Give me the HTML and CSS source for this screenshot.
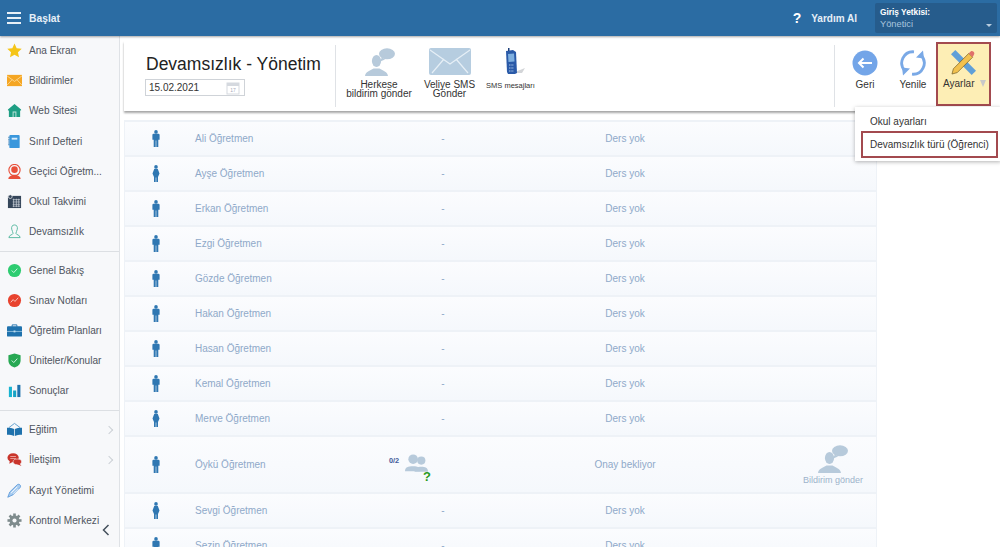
FILE: index.html
```html
<!DOCTYPE html>
<html lang="tr">
<head>
<meta charset="utf-8">
<title>Devamsızlık - Yönetim</title>
<link rel="stylesheet" href="styles.css">
</head>
<body>
<svg class="defs" width="0" height="0">
  <symbol id="man" viewBox="0 0 8 17"><ellipse cx="4" cy="1.900" rx="1.800" ry="1.900"/><path d="M.4 5q0-1.200 1.200-1.200h4.800q1.200 0 1.200 1.200v4.800H6.300V17H4.300v-6.500h-.6V17H1.700V9.800H.4z"/></symbol>
  <symbol id="woman" viewBox="0 0 8 17"><ellipse cx="4" cy="1.900" rx="1.800" ry="1.900"/><path d="M2.200 4h3.600L7.500 8.500 6 12v5H4.300v-4.500h-.6V17H2v-5L.5 8.500z"/></symbol>
  <symbol id="chat" viewBox="0 0 30 28"><ellipse cx="22" cy="5.800" rx="8" ry="5.500"/><path d="M17 9.500l-3 4.500 6-2.500z"/><ellipse cx="11.500" cy="13" rx="4.600" ry="6"/><path d="M0 28c.5-4.500 5-5 8.500-7.500h6C18 23 22.500 23.500 23 28z"/></symbol>
</svg>
<header class="topbar">
  <div class="burger"><i></i><i></i><i></i></div>
  <span class="start">Başlat</span>
  <span class="help-mark">?</span>
  <span class="help">Yardım Al</span>
  <div class="role">
    <b>Giriş Yetkisi:</b>
    <span class="role-value">Yönetici</span>
    <span class="role-caret"></span>
  </div>
</header>
<div class="shell">
  <nav class="sidebar">
    <a class="nav-item"><svg class="nav-icon" viewBox="0 0 16 16"><path fill="#f5c518" d="M8 .5l2.300 5 5.400.6-4 3.700 1.100 5.400L8 12.500l-4.800 2.700 1.100-5.400-4-3.700 5.400-.6z"/></svg>Ana Ekran</a>
    <a class="nav-item"><svg class="nav-icon" viewBox="0 0 16 12"><rect width="16" height="12" fill="#f5a623"/><path d="M0 1l8 6 8-6M0 11l5.500-6M16 11l-5.500-6" fill="none" stroke="#fde1a8" stroke-width=".8"/></svg>Bildirimler</a>
    <a class="nav-item"><svg class="nav-icon" viewBox="0 0 16 16"><path fill="#1e9e84" d="M8 1l7 6v1h-1v7H2V8H1V7z"/><path fill="#bfe5dc" d="M6 9h4v6H9v-5H7v5H6z"/></svg>Web Sitesi</a>
    <a class="nav-item"><svg class="nav-icon" viewBox="0 0 16 16"><rect x="2.500" y="1" width="11" height="14" rx="1" fill="#3a97dc"/><rect x="5" y="4" width="6" height="2" fill="#d7ecfb"/><path d="M2 3v10" stroke="#1b6aa8" stroke-width="1.200" stroke-dasharray="1 1"/></svg>Sınıf Defteri</a>
    <a class="nav-item"><svg class="nav-icon" viewBox="0 0 16 16"><circle cx="8" cy="6.500" r="6" fill="none" stroke="#e8503a" stroke-width="1.200"/><circle cx="8" cy="6" r="3.500" fill="#e8503a"/><path fill="#e8503a" d="M1.500 16c0-3 3-3.500 5-4.500h3c2 1 5 1.500 5 4.500z"/></svg>Geçici Öğretm...</a>
    <a class="nav-item"><svg class="nav-icon" viewBox="0 0 16 16"><rect x="1" y="2" width="14" height="13" fill="#35465a"/><circle cx="3.500" cy="2.800" r="2" fill="#35465a" stroke="#fff" stroke-width=".7"/><path d="M6 6h8M6 8.500h8M6 11h8M6 13h8M7 5v9M10 5v9M12.500 5v9" stroke="#cfd6dd" stroke-width=".7"/></svg>Okul Takvimi</a>
    <a class="nav-item"><svg class="nav-icon" viewBox="0 0 16 16"><path fill="none" stroke="#56b9a0" stroke-width="1" d="M8 1c2.500 0 3.500 2 3 4.500-.3 2-1.500 3-1.500 4.500 0 1.500 4.500 1.500 4.500 4.500H2C2 11.500 6.500 11.500 6.500 10 6.500 8.500 5.300 7.500 5 5.500 4.500 3 5.500 1 8 1z"/></svg>Devamsızlık</a>
    <hr class="nav-rule">
    <a class="nav-item"><svg class="nav-icon" viewBox="0 0 16 16"><circle cx="8" cy="8" r="7" fill="#2ecc71"/><path d="M5 8l2.200 2.200L11 6" fill="none" stroke="#d5f5e3" stroke-width="1"/></svg>Genel Bakış</a>
    <a class="nav-item"><svg class="nav-icon" viewBox="0 0 16 16"><circle cx="8" cy="8" r="7" fill="#e8432e"/><path d="M4 10l2.500-3 2 2L12 5" fill="none" stroke="#f8c9c2" stroke-width="1"/></svg>Sınav Notları</a>
    <a class="nav-item"><svg class="nav-icon" viewBox="0 0 16 14"><path d="M5.500 3V1h5v2" fill="none" stroke="#1f72ad" stroke-width="1"/><rect y="2.500" width="16" height="11" rx="1" fill="#1f72ad"/><path d="M0 8h16" stroke="#bcdcf0" stroke-width=".7"/><rect x="7" y="7" width="2" height="2" fill="#bcdcf0"/></svg>Öğretim Planları</a>
    <a class="nav-item"><svg class="nav-icon" viewBox="0 0 16 16"><path fill="#27a853" d="M8 .5l6.500 2V8c0 4-3 6.500-6.500 7.500C4.500 14.500 1.500 12 1.500 8V2.500z"/><path d="M5 8l2.200 2.200L11 6" fill="none" stroke="#d5f5e3" stroke-width="1"/></svg>Üniteler/Konular</a>
    <a class="nav-item"><svg class="nav-icon" viewBox="0 0 16 16"><rect x="2" y="4" width="3.300" height="11" fill="#17b3d1"/><rect x="6.500" y="8" width="3.300" height="7" fill="#17a2c4"/><rect x="11" y="2" width="3.300" height="13" fill="#1f72ad"/></svg>Sonuçlar</a>
    <hr class="nav-rule">
    <a class="nav-item has-sub"><svg class="nav-icon" viewBox="0 0 16 16"><path d="M2 6l6-4.500L14 6" fill="none" stroke="#5d9ccb" stroke-width="1"/><path fill="#1f72ad" d="M0 6c3 0 6 .3 7.600 1.500V15C6 14 3 13.500 0 13.500zM16 6c-3 0-6 .3-7.600 1.500V15c1.600-1 4.600-1.500 7.600-1.500z"/></svg>Eğitim</a>
    <a class="nav-item has-sub"><svg class="nav-icon" viewBox="0 0 16 16"><ellipse cx="6.500" cy="6" rx="6" ry="4.800" fill="#c9352b"/><path fill="#c9352b" d="M3 9l-.5 3.500L7 10z"/><ellipse cx="11" cy="10.500" rx="4.500" ry="3" fill="#c9352b" stroke="#f7f8fa" stroke-width=".6"/><path fill="#c9352b" d="M13 12l2.500 3-4.500-2z"/><path d="M3.500 4.800h6M3.500 7h6" stroke="#f4c2bd" stroke-width=".8"/></svg>İletişim</a>
    <a class="nav-item"><svg class="nav-icon" viewBox="0 0 16 16"><path fill="#a9cdf0" stroke="#4c8fd6" stroke-width=".8" d="M.8 15.200L3 9.500 11 1.800c2-1.500 4.500 1 3 3L6.500 12.500z"/><path fill="none" stroke="#fff" stroke-width=".9" d="M4.500 10.500L11 4M7 11.500l5-5"/></svg>Kayıt Yönetimi</a>
    <a class="nav-item"><svg class="nav-icon" viewBox="0 0 16 16"><circle cx="8" cy="8" r="3.800" fill="none" stroke="#7f8c8d" stroke-width="3"/><g fill="#7f8c8d"><rect x="6.600" y=".5" width="2.800" height="15"/><rect x="6.600" y=".5" width="2.800" height="15" transform="rotate(45 8 8)"/><rect x="6.600" y=".5" width="2.800" height="15" transform="rotate(90 8 8)"/><rect x="6.600" y=".5" width="2.800" height="15" transform="rotate(135 8 8)"/></g><circle cx="8" cy="8" r="2.200" fill="#f7f8fa"/></svg>Kontrol Merkezi</a>
    <svg class="collapse" viewBox="0 0 8 12"><path d="M6.500 1L1.500 6l5 5" fill="none" stroke="#44505c" stroke-width="1.500"/></svg>
  </nav>
  <main class="content">
    <section class="toolbar">
      <div class="title-block">
        <h1>Devamsızlık - Yönetim</h1>
        <div class="date-box"><span>15.02.2021</span><svg class="cal" viewBox="0 0 14 14"><rect x="1" y="2" width="12" height="11" fill="#fff" stroke="#d5d9df"/><rect x="1" y="2" width="12" height="3" fill="#d5d9df"/><text x="7" y="11" class="cal-num">17</text></svg></div>
      </div>
      <div class="actions">
        <div class="action"><svg class="act-chat"><use href="#chat"/></svg><span>Herkese<br>bildirim gönder</span></div>
        <div class="action sms"><svg class="act-mail" viewBox="0 0 42 27"><rect width="42" height="27" rx="2" fill="#b6cde0"/><path d="M1 2l20 14L41 2M3 25l12-14M39 25L27 11" fill="none" stroke="#e6eff6" stroke-width="1.200"/></svg><span>Veliye SMS<br>Gönder</span></div>
        <div class="action phone"><svg class="act-phone" viewBox="0 0 20 26"><path fill="#d3d5d8" d="M10 24l10-4-3 5H8z"/><path fill="#2a5aa8" d="M1 3l7-1 3 2 1 21-2 1H3l-1-2z"/><path fill="#1d3f7a" d="M3 0h1.500v3H3z"/><path fill="#7fb0e0" d="M3 6l6-.5.500 8-6 .5z"/><path d="M4 17h5M4 20h5M4 23h5" stroke="#a5c2e6" stroke-width="1" stroke-dasharray="1.500 .8"/></svg><span>SMS mesajları</span></div>
      </div>
      <div class="nav-actions">
        <div class="tool"><svg class="tool-icon" viewBox="0 0 26 26"><circle cx="13" cy="13" r="12.500" fill="#73a5e8"/><path d="M20 13H7M11.500 8.500L7 13l4.500 4.500" fill="none" stroke="#fff" stroke-width="2"/></svg><span>Geri</span></div>
        <div class="tool"><svg class="tool-icon" viewBox="0 0 26 26"><g fill="none" stroke="#7aa9e6" stroke-width="2.800"><path d="M21 5.200A11.200 11.200 0 0 1 12 24.200"/><path d="M5 20.800A11.200 11.200 0 0 1 14 1.800"/></g><path fill="#7aa9e6" d="M16 7.500L24 8.500 23 .5zM10 18.500L2 17.500 3 25.500z"/></svg><span>Yenile</span></div>
        <div class="tool settings"><svg class="tool-icon" viewBox="0 0 26 26"><path d="M4.500 0L0 4.500 21.500 26l4.500-4.500z" fill="#5f9fd8"/><path d="M1 25l1.500-5.500 16-16 4 4-16 16z" fill="#f2c14e" stroke="#6f5a22" stroke-width=".7"/><path d="M18.500 3.500l2-2c1-.8 2-.6 3 .4s1 2.200.3 3.100l-1.300 2.500z" fill="#e0706a"/></svg><span>Ayarlar<i class="down"></i></span></div>
      </div>
    </section>
    <div class="menu">
      <div class="menu-item">Okul ayarları</div>
      <div class="menu-item marked">Devamsızlık türü (Öğrenci)</div>
    </div>
    <section class="list">
      <div class="row"><svg class="person"><use href="#man"/></svg><span class="name">Ali Öğretmen</span><span class="dash">-</span><span class="status">Ders yok</span></div>
      <div class="row"><svg class="person"><use href="#woman"/></svg><span class="name">Ayşe Öğretmen</span><span class="dash">-</span><span class="status">Ders yok</span></div>
      <div class="row"><svg class="person"><use href="#man"/></svg><span class="name">Erkan Öğretmen</span><span class="dash">-</span><span class="status">Ders yok</span></div>
      <div class="row"><svg class="person"><use href="#man"/></svg><span class="name">Ezgi Öğretmen</span><span class="dash">-</span><span class="status">Ders yok</span></div>
      <div class="row"><svg class="person"><use href="#man"/></svg><span class="name">Gözde Öğretmen</span><span class="dash">-</span><span class="status">Ders yok</span></div>
      <div class="row"><svg class="person"><use href="#man"/></svg><span class="name">Hakan Öğretmen</span><span class="dash">-</span><span class="status">Ders yok</span></div>
      <div class="row"><svg class="person"><use href="#man"/></svg><span class="name">Hasan Öğretmen</span><span class="dash">-</span><span class="status">Ders yok</span></div>
      <div class="row"><svg class="person"><use href="#man"/></svg><span class="name">Kemal Öğretmen</span><span class="dash">-</span><span class="status">Ders yok</span></div>
      <div class="row"><svg class="person"><use href="#woman"/></svg><span class="name">Merve Öğretmen</span><span class="dash">-</span><span class="status">Ders yok</span></div>
      <div class="row tall"><svg class="person"><use href="#man"/></svg><span class="name">Öykü Öğretmen</span>
        <span class="dash attend"><b>0/2</b><svg class="group" viewBox="0 0 24 18"><g fill="#b7cadb"><circle cx="17" cy="6.500" r="4.300"/><path d="M10 18c0-4 3-5 7-5s7 1 7 5z"/><circle cx="8.500" cy="5" r="5"/><path d="M0 17.500c0-4 3-5 8.500-5s6 1 7 5z"/></g></svg><em>?</em></span>
        <span class="status">Onay bekliyor</span>
        <span class="notify"><svg class="notify-icon"><use href="#chat"/></svg>Bildirim gönder</span></div>
      <div class="row"><svg class="person"><use href="#woman"/></svg><span class="name">Sevgi Öğretmen</span><span class="dash">-</span><span class="status">Ders yok</span></div>
      <div class="row"><svg class="person"><use href="#man"/></svg><span class="name">Sezin Öğretmen</span><span class="dash">-</span><span class="status">Ders yok</span></div>
    </section>
  </main>
</div>
</body>
</html>
```
FILE: styles.css
```css
* { box-sizing: border-box; }
html, body { margin: 0; height: 547px; overflow: hidden; }
body { font-family: "Liberation Sans", Arial, sans-serif; background: #fff; color: #333; display: flex; flex-direction: column; }
.defs { position: absolute; }

.topbar { height: 36px; flex: none; background: #2b6ca3; display: flex; align-items: center; color: #fff; box-shadow: 0 1px 2px rgba(0,0,0,.35); position: relative; z-index: 3; padding-left: 7px; }
.burger { width: 14px; display: flex; flex-direction: column; gap: 3px; }
.burger i { display: block; height: 2px; background: #e8f0f7; }
.start { font-size: 10.300px; font-weight: 700; margin-left: 8px; flex: 1; color: #e6eff7; }
.help-mark { font-size: 14px; font-weight: 700; margin-right: 10px; }
.help { font-size: 10px; font-weight: 700; margin-right: 18px; color: #e6eff7; }
.role { width: 122px; height: 30px; background: #265c8c; border-radius: 2px; margin-right: 3px; padding: 4px 5px; position: relative; display: flex; flex-direction: column; gap: 2px; font-size: 9.300px; line-height: 10px; }
.role b { font-size: 8.300px; }
.role-value { color: #a9c6de; }
.role-caret { position: absolute; right: 5px; bottom: 6px; border: 3px solid transparent; border-top: 3px solid #b7cde0; border-bottom: 0; width: 0; }

.shell { flex: 1; display: flex; min-height: 0; }
.sidebar { width: 120px; flex: none; background: #f7f8fa; border-right: 1px solid #dfe2e6; position: relative; overflow: hidden; }
.nav-item { display: flex; align-items: center; height: 30.100px; padding-bottom: .6px; font-size: 10.100px; color: #4f5560; padding-left: 7px; position: relative; }
.nav-icon { width: 15px; height: 15px; margin-right: 7px; flex: none; }
.nav-rule { border: 0; border-top: 1px solid #dcdfe3; margin: 4px 0; height: 0; }
.has-sub::after { content: ""; position: absolute; right: 7px; top: 12px; width: 5px; height: 5px; border-top: 1px solid #ccd1d6; border-right: 1px solid #ccd1d6; transform: rotate(45deg); }
.collapse { position: absolute; right: 9px; bottom: 11px; width: 8px; height: 12px; }

.content { flex: 1; min-width: 0; background: #fff; padding: 5px 0 0 4px; position: relative; overflow: hidden; }
.toolbar { height: 70px; background: #fff; box-shadow: 0 2px 2px rgba(0,0,0,.35); display: flex; align-items: stretch; padding: 4px 0 4px; }
.title-block { width: 212px; padding: 9px 0 0 22px; border-right: 1px solid #dfe2e6; }
h1 { margin: 0; font-size: 17.500px; font-weight: 400; line-height: 20px; color: #222; white-space: nowrap; }
.date-box { margin: 5px 0 0 -1px; width: 100px; height: 17px; border: 1px solid #cfd3d8; display: flex; align-items: center; justify-content: space-between; padding: 0 4px 0 3px; font-size: 10px; color: #333; }
.cal { width: 14px; height: 14px; }
.cal-num { font-size: 5px; text-anchor: middle; fill: #aab; font-family: "Liberation Sans", sans-serif; }

.actions { display: flex; flex: 1; padding-left: 8px; }
.action { display: flex; flex-direction: column; align-items: center; text-align: center; font-size: 10px; line-height: 9px; color: #333; width: 70px; padding-top: 3px; white-space: nowrap; }
.action svg { flex: none; margin-bottom: 4px; }
.act-chat { width: 30px; height: 28px; fill: #b7cadb; margin-left: 2px; }
.act-mail { width: 42px; height: 27px; margin-bottom: 5px !important; }
.sms { width: 62px; margin-left: 4.500px; }
.phone { width: 56px; font-size: 7.500px; margin-left: 2px; }
.act-phone { width: 20px; height: 26px; margin-bottom: 7px !important; margin-left: 8px; }

.nav-actions { display: flex; border-left: 1px solid #dfe2e6; height: 62px; padding-right: 9px; width: 166px; justify-content: flex-end; align-items: flex-start; }
.tool { width: 48px; display: flex; flex-direction: column; align-items: center; font-size: 10px; color: #333; padding-top: 5px; white-space: nowrap; gap: 3px; }
.tool-icon { width: 26px; height: 26px; flex: none; }
.settings { width: 55px; height: 64px; margin-top: -3px; margin-left: -1px; background: #fdeeb5; border: 2px solid #a34a4f; padding-top: 6px; gap: 2px; }
.settings .tool-icon { width: 25px; height: 25px; }
.settings span { align-self: flex-start; padding-left: 5px; margin-top: 1px; display: flex; align-items: center; }
.down { width: 0; border: 3.500px solid transparent; border-top: 7px solid #c8c8c8; border-bottom: 0; margin-left: 5px; }

.menu { position: absolute; left: 735px; top: 71px; width: 146px; height: 54px; background: #fff; box-shadow: 0 1px 4px rgba(0,0,0,.3); z-index: 2; padding-top: 4px; font-size: 10px; color: #333; }
.menu-item { height: 22px; line-height: 22px; padding-left: 15px; white-space: nowrap; }
.marked { height: 27px; line-height: 23px; margin: -2px 0 0 6px; padding-left: 7px; border: 2px solid #a34a4f; width: 137px; }

.list { margin-top: 9px; width: 753px; }
.row { height: 35.050px; padding-bottom: .6px; display: grid; grid-template-columns: 70px 172px 152px 212px 1fr; align-items: center; border: 1px solid #eef2f7; border-width: 2px 1px 0; background: linear-gradient(#fbfcfe, #f5f8fc); font-size: 10px; color: #8fa9c9; }
.tall { height: 56.600px; padding-bottom: 0; }
.person { width: 8px; height: 17px; justify-self: center; fill: #2f77b2; margin-left: -9px; }
.name { white-space: nowrap; }
.dash { text-align: center; }
.status { text-align: center; white-space: nowrap; }
.attend { display: flex; align-items: center; padding: 0 0 0 22px; position: relative; }
.attend b { font-size: 7.300px; color: #3f5a9a; margin-bottom: 9px; }
.group { width: 23px; height: 18px; margin: 0 0 3px 5.500px; }
.attend em { position: absolute; left: 56px; top: 15px; font-style: normal; font-weight: 700; font-size: 13px; color: #2a9a1d; }
.notify { display: flex; flex-direction: column; align-items: center; font-size: 9px; color: #9db3cb; white-space: nowrap; grid-column: 5; justify-self: end; margin-right: 13px; gap: 2px; }
.notify-icon { width: 30px; height: 28px; fill: #b7cadb; }
```
